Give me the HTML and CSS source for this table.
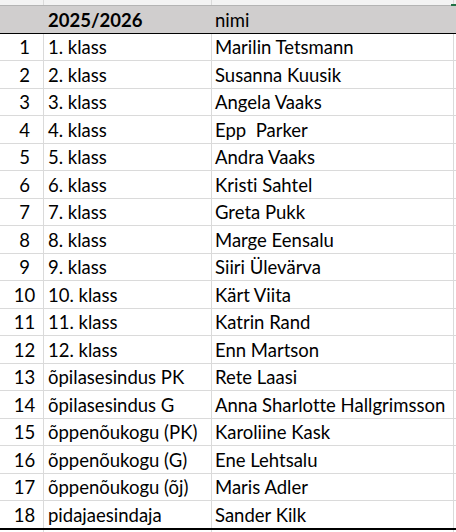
FILE: index.html
```html
<!DOCTYPE html>
<html lang="et">
<head>
<meta charset="utf-8">
<link rel="stylesheet" href="styles.css">
</head>
<body>
<div class="sheet">
  <div class="row strip"><div class="c a"></div><div class="c b"></div><div class="c n"></div><div class="c d"></div></div>
  <div class="row head"><div class="c a"></div><div class="c b bold">2025/2026</div><div class="c n">nimi</div><div class="c d"></div></div>
  <div class="row r27"><div class="c a">1</div><div class="c b">1. klass</div><div class="c n">Marilin Tetsmann</div><div class="c d"></div></div>
  <div class="row r28"><div class="c a">2</div><div class="c b">2. klass</div><div class="c n">Susanna Kuusik</div><div class="c d"></div></div>
  <div class="row r27"><div class="c a">3</div><div class="c b">3. klass</div><div class="c n">Angela Vaaks</div><div class="c d"></div></div>
  <div class="row r28"><div class="c a">4</div><div class="c b">4. klass</div><div class="c n">Epp&nbsp; Parker</div><div class="c d"></div></div>
  <div class="row r27"><div class="c a">5</div><div class="c b">5. klass</div><div class="c n">Andra Vaaks</div><div class="c d"></div></div>
  <div class="row r28"><div class="c a">6</div><div class="c b">6. klass</div><div class="c n">Kristi Sahtel</div><div class="c d"></div></div>
  <div class="row r27"><div class="c a">7</div><div class="c b">7. klass</div><div class="c n">Greta Pukk</div><div class="c d"></div></div>
  <div class="row r28"><div class="c a">8</div><div class="c b">8. klass</div><div class="c n">Marge Eensalu</div><div class="c d"></div></div>
  <div class="row r27"><div class="c a">9</div><div class="c b">9. klass</div><div class="c n">Siiri Ülevärva</div><div class="c d"></div></div>
  <div class="row r28"><div class="c a">10</div><div class="c b">10. klass</div><div class="c n">Kärt Viita</div><div class="c d"></div></div>
  <div class="row r27"><div class="c a">11</div><div class="c b">11. klass</div><div class="c n">Katrin Rand</div><div class="c d"></div></div>
  <div class="row r28"><div class="c a">12</div><div class="c b">12. klass</div><div class="c n">Enn Martson</div><div class="c d"></div></div>
  <div class="row r27"><div class="c a">13</div><div class="c b">õpilasesindus PK</div><div class="c n">Rete Laasi</div><div class="c d"></div></div>
  <div class="row r28"><div class="c a">14</div><div class="c b">õpilasesindus G</div><div class="c n">Anna Sharlotte Hallgrimsson</div><div class="c d"></div></div>
  <div class="row r27"><div class="c a">15</div><div class="c b">õppenõukogu (PK)</div><div class="c n">Karoliine Kask</div><div class="c d"></div></div>
  <div class="row r28"><div class="c a">16</div><div class="c b">õppenõukogu (G)</div><div class="c n">Ene Lehtsalu</div><div class="c d"></div></div>
  <div class="row r27"><div class="c a">17</div><div class="c b">õppenõukogu (õj)</div><div class="c n">Maris Adler</div><div class="c d"></div></div>
  <div class="row last"><div class="c a">18</div><div class="c b">pidajaesindaja</div><div class="c n">Sander Kilk</div><div class="c d"></div></div>
  <div class="row tail"><div class="c a"></div><div class="c b"></div><div class="c n"></div><div class="c d"></div></div>
</div>
<div class="mark"></div>
</body>
</html>
```

FILE: styles.css
```css
html, body {
  margin: 0;
  padding: 0;
  background: #ffffff;
}
body {
  width: 456px;
  height: 532px;
  overflow: hidden;
  position: relative;
  font-family: Lato, "Liberation Sans", sans-serif;
  font-size: 18.5px;
  font-variant-ligatures: none;
  font-feature-settings: "liga" 0, "clig" 0;
  color: #000;
}
.sheet {
  display: flex;
  flex-direction: column;
}
.row {
  display: grid;
  grid-template-columns: 44px 168px 242px 2px;
  box-sizing: border-box;
  border-bottom: 1px solid #dadada;
}
.c {
  box-sizing: border-box;
  border-right: 1px solid #dadada;
  display: flex;
  align-items: center;
  white-space: nowrap;
  overflow: hidden;
}
.c.d { border-right: none; }
.a {
  justify-content: center;
  padding-left: 6px;
}
.b { padding-left: 4px; }
.n { padding-left: 3px; }
.strip {
  height: 6px;
  background: #f3f3f3;
  border-bottom: 1px solid #b4b4b4;
}
.head {
  height: 28px;
  background: #d0cece;
  border-bottom: 1px solid #000;
}
.head .c { border-right-color: transparent; }
.bold { font-weight: 700; }
.r28 { height: 28px; }
.r27 { height: 27px; }
.last { border-bottom: 2px solid #000; height: 29px; }
.tail { height: 10px; border-bottom: none; }
.mark {
  position: absolute;
  top: 4px;
  right: 0;
  width: 5px;
  height: 2px;
  background: #217346;
}
```
